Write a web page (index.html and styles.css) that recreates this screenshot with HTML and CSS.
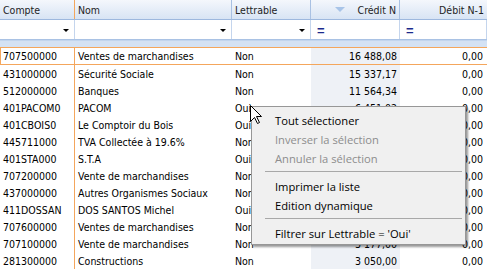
FILE: index.html
```html
<!DOCTYPE html>
<html lang="fr">
<head>
    <meta charset="UTF-8">
    <title>Plan comptable</title>
    <link rel="stylesheet" href="styles.css">
</head>
<body>

    <!-- Grille des comptes -->
    <div class="grid">
        <div class="row head">
            <div class="cell fixed">Compte</div>
            <div class="cell">Nom</div>
            <div class="cell">Lettrable</div>
            <div class="cell num sorted"><span class="sort"></span>Crédit N</div>
            <div class="cell num">Débit N-1</div>
        </div>

        <div class="row filter">
            <div class="cell"><span class="drop"></span></div>
            <div class="cell"><span class="drop"></span></div>
            <div class="cell"><span class="drop"></span></div>
            <div class="cell"><span class="eq">=</span></div>
            <div class="cell"><span class="eq">=</span></div>
        </div>

        <div class="band"></div>

        <div class="row data focus">
            <div class="cell fixed">707500000</div><div class="cell">Ventes de marchandises</div><div class="cell">Non</div><div class="cell num credit">16 488,08</div><div class="cell num">0,00</div>
        </div>
        <div class="row data">
            <div class="cell fixed">431000000</div><div class="cell">Sécurité Sociale</div><div class="cell">Non</div><div class="cell num credit">15 337,17</div><div class="cell num">0,00</div>
        </div>
        <div class="row data">
            <div class="cell fixed">512000000</div><div class="cell">Banques</div><div class="cell">Non</div><div class="cell num credit">11 564,34</div><div class="cell num">0,00</div>
        </div>
        <div class="row data">
            <div class="cell fixed">401PACOM0</div><div class="cell">PACOM</div><div class="cell">Oui</div><div class="cell num credit">6 451,02</div><div class="cell num">0,00</div>
        </div>
        <!-- credits caches par le menu -->
        <div class="row data">
            <div class="cell fixed">401CBOIS0</div><div class="cell">Le Comptoir du Bois</div><div class="cell">Oui</div><div class="cell num credit"></div><div class="cell num">0,00</div>
        </div>
        <div class="row data">
            <div class="cell fixed">445711000</div><div class="cell">TVA Collectée à 19.6%</div><div class="cell">Non</div><div class="cell num credit"></div><div class="cell num">0,00</div>
        </div>
        <div class="row data">
            <div class="cell fixed">401STA000</div><div class="cell">S.T.A</div><div class="cell">Oui</div><div class="cell num credit"></div><div class="cell num">0,00</div>
        </div>
        <div class="row data">
            <div class="cell fixed">707200000</div><div class="cell">Vente de marchandises</div><div class="cell">Non</div><div class="cell num credit"></div><div class="cell num">0,00</div>
        </div>
        <div class="row data">
            <div class="cell fixed">437000000</div><div class="cell">Autres Organismes Sociaux</div><div class="cell">Non</div><div class="cell num credit"></div><div class="cell num">0,00</div>
        </div>
        <div class="row data">
            <div class="cell fixed">411DOSSAN</div><div class="cell">DOS SANTOS Michel</div><div class="cell">Oui</div><div class="cell num credit"></div><div class="cell num">0,00</div>
        </div>
        <div class="row data">
            <div class="cell fixed">707600000</div><div class="cell">Ventes de marchandises</div><div class="cell">Non</div><div class="cell num credit"></div><div class="cell num">0,00</div>
        </div>
        <div class="row data">
            <div class="cell fixed">707100000</div><div class="cell">Vente de marchandises</div><div class="cell">Non</div><div class="cell num credit">3 177,00</div><div class="cell num">0,00</div>
        </div>
        <div class="row data">
            <div class="cell fixed">281300000</div><div class="cell">Constructions</div><div class="cell">Non</div><div class="cell num credit">3 050,00</div><div class="cell num">0,00</div>
        </div>
    </div>

    <!-- Menu contextuel -->
    <div class="menu">
        <div class="item">Tout sélectioner</div>
        <div class="item disabled">Inverser la sélection</div>
        <div class="item disabled">Annuler la sélection</div>
        <div class="sep"></div>
        <div class="item">Imprimer la liste</div>
        <div class="item">Edition dynamique</div>
        <div class="sep"></div>
        <div class="item">Filtrer sur Lettrable = 'Oui'</div>
    </div>

    <!-- Pointeur souris -->
    <svg class="cursor" width="13" height="20" viewBox="0 0 13 20">
        <path d="M0.5 0.5 L0.5 16.5 L4.5 12.5 L7.5 18.5 L9.5 17.5 L6.5 11.5 L11.5 11.5 Z" fill="#fff" stroke="#000" stroke-width="1"/>
    </svg>

</body>
</html>
```

FILE: styles.css
```css
body {
    margin: 0;
    overflow: hidden;
    background: #fff;
    font-family: "DejaVu Sans Condensed", "DejaVu Sans", sans-serif;
    font-stretch: condensed;
    font-size: 10.5px;
    color: #000;
}

.grid {
    width: 487px;
}

.row {
    display: grid;
    grid-template-columns: 75px 157px 79px 89px 87px;
}

.cell {
    box-sizing: border-box;
    padding: 0 3px;
    white-space: nowrap;
    overflow: hidden;
    display: flex;
    align-items: center;
}

.num {
    justify-content: flex-end;
}

/* En-tete */
.head {
    height: 20px;
    box-sizing: border-box;
    border-bottom: 1px solid #9db8de;
    background: linear-gradient(#f4f7fc, #d8e4f4);
    color: #1e1e1e;
}

.head .cell {
    border-right: 1px solid #a9c1e3;
}

.head .cell.fixed {
    border-right-color: #f4a65c;
}

.head .cell:last-child {
    border-right: none;
}

.sort {
    width: 0;
    height: 0;
    border-left: 5px solid transparent;
    border-right: 5px solid transparent;
    border-top: 5px solid #a8c4e8;
    margin-right: 13px;
}

/* Ligne de filtre */
.filter {
    height: 20px;
    box-sizing: border-box;
    border-bottom: 1px solid #a9c2e4;
}

.filter .cell {
    border-right: 1px solid #c4d5ed;
    justify-content: flex-end;
}

.filter .cell:nth-child(n+4) {
    justify-content: flex-start;
}

.drop {
    width: 0;
    height: 0;
    border-left: 3px solid transparent;
    border-right: 3px solid transparent;
    border-top: 3px solid #000;
    margin-right: 2px;
    margin-top: 1px;
}

.eq {
    color: #1c2a8c;
    font-family: "Liberation Sans", sans-serif;
    font-size: 13px;
    font-weight: bold;
    padding-left: 3px;
    margin-top: 1px;
}

.band {
    height: 7px;
    background: #d4e2f4;
    border-top: 1px solid #c2d5ee;
    box-sizing: border-box;
}

/* Lignes de donnees */
.data {
    height: 17px;
}

.data .cell.fixed {
    border-right: 1px solid #f4a65c;
}

.data .cell.num:last-child {
    padding-right: 4px;
}

.credit {
    background: #eef1f6;
}

.focus {
    height: 18px;
    box-sizing: border-box;
    border-top: 1px solid #f4a65c;
    border-bottom: 1px solid #f4a65c;
}

.focus .cell.fixed {
    border-left: 1px solid #f4a65c;
    padding-left: 2px;
}

/* Menu contextuel */
.menu {
    position: absolute;
    left: 251px;
    top: 106px;
    width: 215px;
    box-sizing: border-box;
    padding: 4px 0 1px;
    background: #f0f0f0;
    border: 1px solid #979797;
    box-shadow: 2px 2px 2px rgba(0, 0, 0, 0.4);
    font-family: "Open Sans", sans-serif;
    font-stretch: normal;
    font-size: 11.2px;
}

.item {
    height: 19px;
    line-height: 19px;
    padding-left: 23px;
    color: #000;
}

.item.disabled {
    color: #8d8d8d;
}

.sep {
    height: 9px;
    box-sizing: border-box;
    padding-top: 3px;
    margin: 0 3px 0 13px;
}

.sep::before {
    content: "";
    display: block;
    height: 1px;
    background: #a8a8a8;
}

.cursor {
    position: absolute;
    left: 250px;
    top: 105px;
}
```
